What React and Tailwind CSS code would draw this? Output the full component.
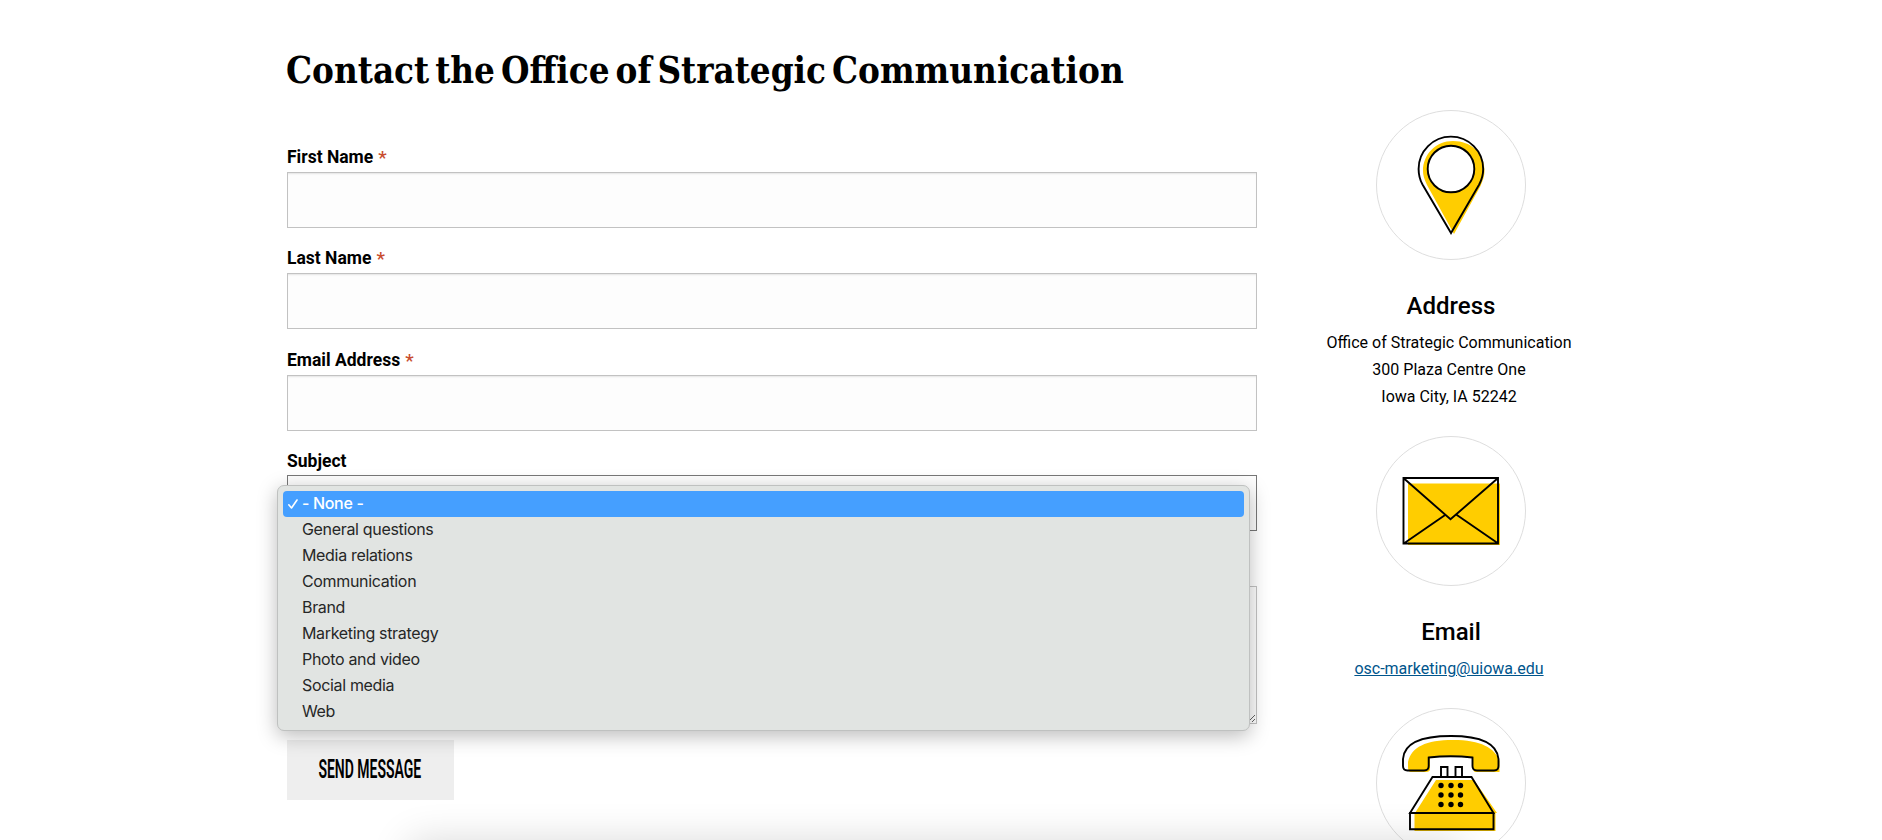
const options = [
  "- None -",
  "General questions",
  "Media relations",
  "Communication",
  "Brand",
  "Marketing strategy",
  "Photo and video",
  "Social media",
  "Web",
];

function TextField({ label, className }) {
  return (
    <div className={className}>
      <label className="flex h-[31px] items-center pt-[2px] text-[17.5px] font-bold leading-[31px]">
        <span>{label}</span>
        <span className="ml-[5px] text-[19px] font-medium text-[#c84c2e]">*</span>
      </label>
      <input
        type="text"
        className="block h-14 w-full border border-[#c2c2c2] bg-[#fdfdfd] shadow-[inset_0_2px_2px_-1px_rgba(0,0,0,0.1)] outline-none"
      />
    </div>
  );
}

function IconCircle({ children }) {
  return (
    <div className="h-[150px] w-[150px] rounded-full border border-[#dedede] bg-white">
      <svg viewBox="1 1 148 148" className="h-full w-full" fill="none" stroke="#000" strokeWidth="1.9">
        {children}
      </svg>
    </div>
  );
}

function PinIcon() {
  return (
    <>
      <path
        fill="#ffcd00"
        stroke="none"
        fillRule="evenodd"
        d="M78 124L51 75C48 69 47 65 47 61C47 44 60 31 77 31C95 31 108.500 43 108.500 61C108.500 66 107 70 104.500 76ZM75 36A23 23 0 1 0 75 82A23 23 0 1 0 75 36Z"
      />
      <path d="M75 123L46.500 74.500C43.500 69 42.600 64.500 42.600 58.900A32.300 32.300 0 0 1 107.200 58.900C107.200 64.500 106 69 103.200 74.500Z" />
      <circle cx="75" cy="59" r="23.300" />
    </>
  );
}

function MailIcon() {
  return (
    <>
      <path fill="#ffcd00" stroke="none" d="M32 47.500h92V109H32z" />
      <path d="M27.500 42h94.500v65.500H27.500zM28 42.500L74.500 83.300L121.500 42.500M28.500 107L69.500 78.800M121.500 107L80.500 78.800" />
    </>
  );
}

function PhoneIcon() {
  return (
    <>
      <path
        fill="#ffcd00"
        stroke="none"
        d="M32 54C35 39 50 32 77 32C105 32 119 40 123.500 53V64H100C97 64 97 62 97 50C82 47.500 67 47.500 54 50V61Q54 64 50 64H35Q32 64 32 59ZM60 72H98L121 105H119.500V123H38.500V105H39Z"
      />
      <path d="M27 51C28 35 45 28 75 28S121 35 122.500 51V58Q122.500 62.500 118 62.500H101Q96.500 62.500 96.500 58V49.500Q75 47 52.700 49.500V58Q52.700 62.500 48 62.500H31.500Q27 62.500 27 58Z" />
      <path d="M65 68.500V59H71.500V68.500M79.500 68.500V59H86V68.500" />
      <path d="M56.500 69H95.500L117.500 105H34ZM34 105H117.500V121.200H34Z" />
      <g fill="#000" stroke="none">
        {[77.5, 87, 96.5].map((y) =>
          [65, 75, 84.5].map((x) => <circle key={`${x}-${y}`} cx={x} cy={y} r="2.700" />)
        )}
      </g>
    </>
  );
}

function SubjectMenu() {
  return (
    <ul className="absolute -left-[11px] top-[9px] z-10 h-[246px] w-[973px] rounded-[7px] border border-[#bfc1c0] bg-[#e1e4e2] p-[5px] font-['Inter'] text-[16px] tracking-[-0.33px] text-[#262727] shadow-[0_5px_20px_rgba(0,0,0,0.27)]">
      {options.map((option, i) => (
        <li
          key={option}
          className={
            i === 0
              ? "flex h-[26px] items-center rounded-[4px] bg-[#459fff] pb-[2px] font-medium text-white"
              : "flex h-[26px] items-center pb-[2px]"
          }
        >
          <span className="flex w-[19px] shrink-0 justify-center pt-[2px]">
            {i === 0 && (
              <svg viewBox="0 0 10 10" className="h-[10px] w-[10px]" fill="none" stroke="white" strokeWidth="1.6" strokeLinecap="round" strokeLinejoin="round">
                <path d="M0.800 5.800L3.500 9L9 1" />
              </svg>
            )}
          </span>
          <span>{option}</span>
        </li>
      ))}
    </ul>
  );
}

export default function App() {
  return (
    <div className="relative h-[840px] w-[1882px] overflow-hidden bg-white font-['Roboto',sans-serif] text-black">
      <div className="flex pl-[287px]">
        <main className="w-[970px] shrink-0">
          <h1 className="mt-[44px] h-[52px] whitespace-nowrap font-['DejaVu_Serif_Condensed','DejaVu_Serif',serif] text-[37px] font-bold leading-[52px]">
            <span className="-ml-px inline-block origin-left scale-x-[0.984] [word-spacing:-5.500px]">
              Contact the Office of Strategic Communication
            </span>
          </h1>

          <form className="mt-[45px]">
            <TextField label="First Name" />
            <TextField label="Last Name" className="mt-[14px]" />
            <TextField label="Email Address" className="mt-[15px]" />

            <div className="mt-[14px]">
              <label className="block h-[30px] text-[17.5px] font-bold leading-[32px]">Subject</label>
              <div className="relative h-14 border border-[#777] bg-[#fdfdfd]">
                <SubjectMenu />
              </div>
            </div>

            <textarea className="mt-[55px] block h-[138px] w-full resize border border-[#c2c2c2] bg-[#fdfdfd] outline-none" />

            <button
              type="button"
              className="mt-4 flex h-[60px] w-[167px] items-center justify-center bg-[#eee] pr-[2px] text-[25px] font-semibold"
            >
              <span className="inline-block scale-x-[0.56] whitespace-nowrap">SEND MESSAGE</span>
            </button>
          </form>
        </main>

        <aside className="ml-[44px] flex w-[300px] shrink-0 flex-col items-center pt-[110px] text-center">
          <IconCircle>
            <PinIcon />
          </IconCircle>
          <h2 className="mt-[29px] text-[24px] font-medium leading-[34px]">Address</h2>
          <p className="mr-[4px] mt-[6px] text-[16px] leading-[27px]">
            Office of Strategic Communication
            <br />
            300 Plaza Centre One
            <br />
            Iowa City, IA 52242
          </p>

          <div className="mt-[26px]">
            <IconCircle>
              <MailIcon />
            </IconCircle>
          </div>
          <h2 className="mt-[29px] text-[24px] font-medium leading-[34px]">Email</h2>
          <a href="#" className="mr-[4px] mt-[6px] text-[16px] leading-[27px] text-[#00558c] underline">
            osc-marketing@uiowa.edu
          </a>

          <div className="mt-[26px]">
            <IconCircle>
              <PhoneIcon />
            </IconCircle>
          </div>
        </aside>
      </div>

      {/* shadow rising from the section below */}
      <div className="absolute left-[420px] top-[852px] h-10 w-[1030px] shadow-[0_0_40px_10px_rgba(0,0,0,0.16)]" />
    </div>
  );
}
